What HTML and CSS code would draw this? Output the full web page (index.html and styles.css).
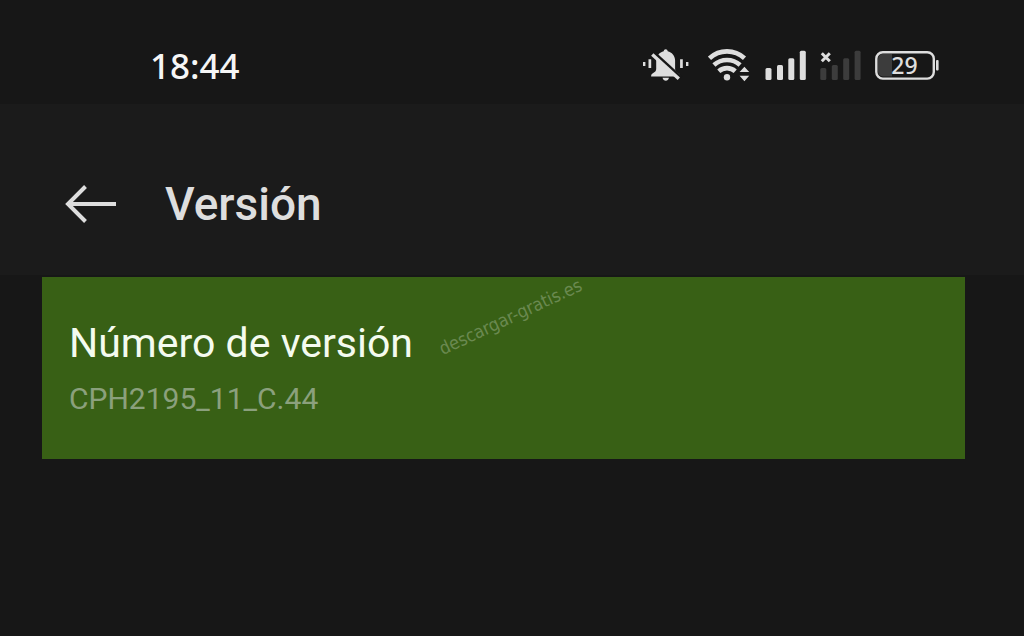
FILE: index.html
```html
<!DOCTYPE html>
<html lang="es">
<head>
<meta charset="utf-8">
<meta name="viewport" content="width=device-width, initial-scale=1">
<title>Versión</title>
<link rel="stylesheet" href="styles.css">
</head>
<body>
<div class="status-bar">
  <time class="clock">18:44</time>
  <div class="status-icons">
    <svg class="icon" width="52" height="34" viewBox="642 49 52 34" aria-label="Silencio">
      <path d="M665.7 49.3c-1.2 0-1.8.8-2 1.9-4 .9-7.500 4.600-7.500 9.300v8.500c0 2-1.200 3-3.300 4.200-1 .6-1.800 1.200-1.800 3.400h29.200c0-2-.8-2.800-1.900-3.400-2.200-1.200-3.300-2.200-3.300-4.200v-8.500c0-4.700-3.300-8.400-7.400-9.300-.2-1.100-.8-1.900-2-1.900z"/>
      <path d="M662.500 77.800h6.500c-.5 2-1.700 3-3.200 3s-2.800-1-3.300-3z"/>
      <path class="cut" d="M654 52.600l27.300 25"/>
      <path class="slash" d="M652.300 54.500l26.500 24.300"/>
      <path d="M643 62h2.400v4H643zM648.500 59.300h2.700v8.700h-2.700zM680.100 59.300h2.700v8.700h-2.700zM686 62h2.400v4H686z"/>
    </svg>
    <svg class="icon" width="43" height="34" viewBox="708 49 43 34" aria-label="Wi-Fi">
      <path class="arc" d="M709.500 58.300Q717 51.400 727 51.400T744.500 58.300M713.900 65Q719.500 60 727 60T740.100 65M718.800 71.200Q722.200 68.100 727 68.100T735.200 71.200"/>
      <circle cx="727" cy="77.300" r="3.200"/>
      <path d="M744.400 66.800l4.800 5.200h-9.600zM744.400 81.200l4.800-5.400h-9.600z"/>
    </svg>
    <svg class="icon" width="41" height="34" viewBox="765 49 41 34" aria-label="Señal SIM 1">
      <rect x="765.500" y="68" width="6" height="12" rx="1.500"/>
      <rect x="777" y="65" width="6" height="15" rx="1.500"/>
      <rect x="788.300" y="58.300" width="6" height="21.700" rx="1.500"/>
      <rect x="799.800" y="50.800" width="6" height="29.200" rx="1.500"/>
    </svg>
    <svg class="icon" width="41" height="34" viewBox="820 49 41 34" aria-label="SIM 2 sin señal">
      <g class="dim">
        <rect x="820.300" y="68" width="6" height="12" rx="1.500"/>
        <rect x="831.800" y="65" width="6" height="15" rx="1.500"/>
        <rect x="843.200" y="58.300" width="6" height="21.700" rx="1.500"/>
        <rect x="854.600" y="50.800" width="6" height="29.200" rx="1.500"/>
      </g>
      <path class="cross" d="M821.800 53.200l8 8M829.800 53.200l-8 8"/>
    </svg>
    <svg class="icon" width="64" height="34" viewBox="875 49 64 34" aria-label="Batería 29 %">
      <path class="charge" d="M892 54v22.500h-9a5 5 0 0 1-5-5V59a5 5 0 0 1 5-5z"/>
      <rect class="shell" x="876.300" y="52.200" width="57.500" height="26.400" rx="6.500"/>
      <rect x="936" y="60" width="2.600" height="10.500" rx="1"/>
      <text class="level" x="904.500" y="74" text-anchor="middle">29</text>
    </svg>
  </div>
</div>
<header class="app-bar">
  <button class="back" type="button" aria-label="Atrás">
    <svg width="52" height="40" viewBox="0 0 52 40"><path class="arrow" d="M20.500 2.500L3 20l17.500 17.500M3 20h48"/></svg>
  </button>
  <h1 class="title">Versión</h1>
</header>
<main class="content">
  <section class="card">
    <h2 class="label">Número de versión</h2>
    <p class="value">CPH2195_11_C.44</p>
    <span class="watermark">descargar-gratis.es</span>
  </section>
</main>
</body>
</html>
```
FILE: styles.css
```css
body {
  margin: 0;
  background: #171717;
  color: #dedede;
  font-family: Roboto, "Liberation Sans", sans-serif;
}

.status-bar {
  display: flex;
  align-items: center;
  justify-content: space-between;
  padding: 40px 85px 12px 150px;
  background: #171717;
}

.clock {
  color: #f6f6f6;
  font: 500 35px/52px "Noto Sans", sans-serif;
}

.status-icons {
  display: flex;
  align-items: center;
  gap: 14px;
}

.icon {
  display: block;
  fill: #dedede;
}

.cut,
.slash,
.arc,
.cross,
.shell,
.arrow {
  fill: none;
  stroke: #dedede;
}

.cut {
  stroke: #171717;
  stroke-width: 3;
}

.slash {
  stroke-width: 3.4;
}

.arc {
  stroke-width: 4.6;
}

.cross {
  stroke-width: 3;
}

.shell {
  stroke-width: 2.4;
}

.dim {
  fill: #3c3c3c;
}

.charge {
  fill: #3c3c3c;
}

.level {
  font: 500 23px "Noto Sans", sans-serif;
}

.app-bar {
  display: flex;
  align-items: center;
  gap: 48px;
  padding: 72px 65px 43px;
  background: #1b1b1b;
}

.back {
  padding: 0;
  border: 0;
  background: none;
}

.back svg {
  display: block;
}

.arrow {
  stroke-width: 4;
}

.title {
  margin: 0;
  font-size: 46px;
  font-weight: 500;
  line-height: 56px;
}

.content {
  padding: 2px 59px 40px 42px;
}

.card {
  position: relative;
  padding: 40px 27px;
  background: #386015;
}

.label {
  margin: 0;
  color: #f4fbef;
  font-size: 41px;
  font-weight: 400;
  line-height: 52px;
}

.value {
  margin: 10px 0 0;
  color: #8ba07d;
  font-size: 30px;
  line-height: 40px;
}

.watermark {
  position: absolute;
  top: 28px;
  left: 391px;
  color: #6a8950;
  font: 18px/24px "DejaVu Sans Condensed", "DejaVu Sans", sans-serif;
  transform: rotate(-25deg);
}
```
